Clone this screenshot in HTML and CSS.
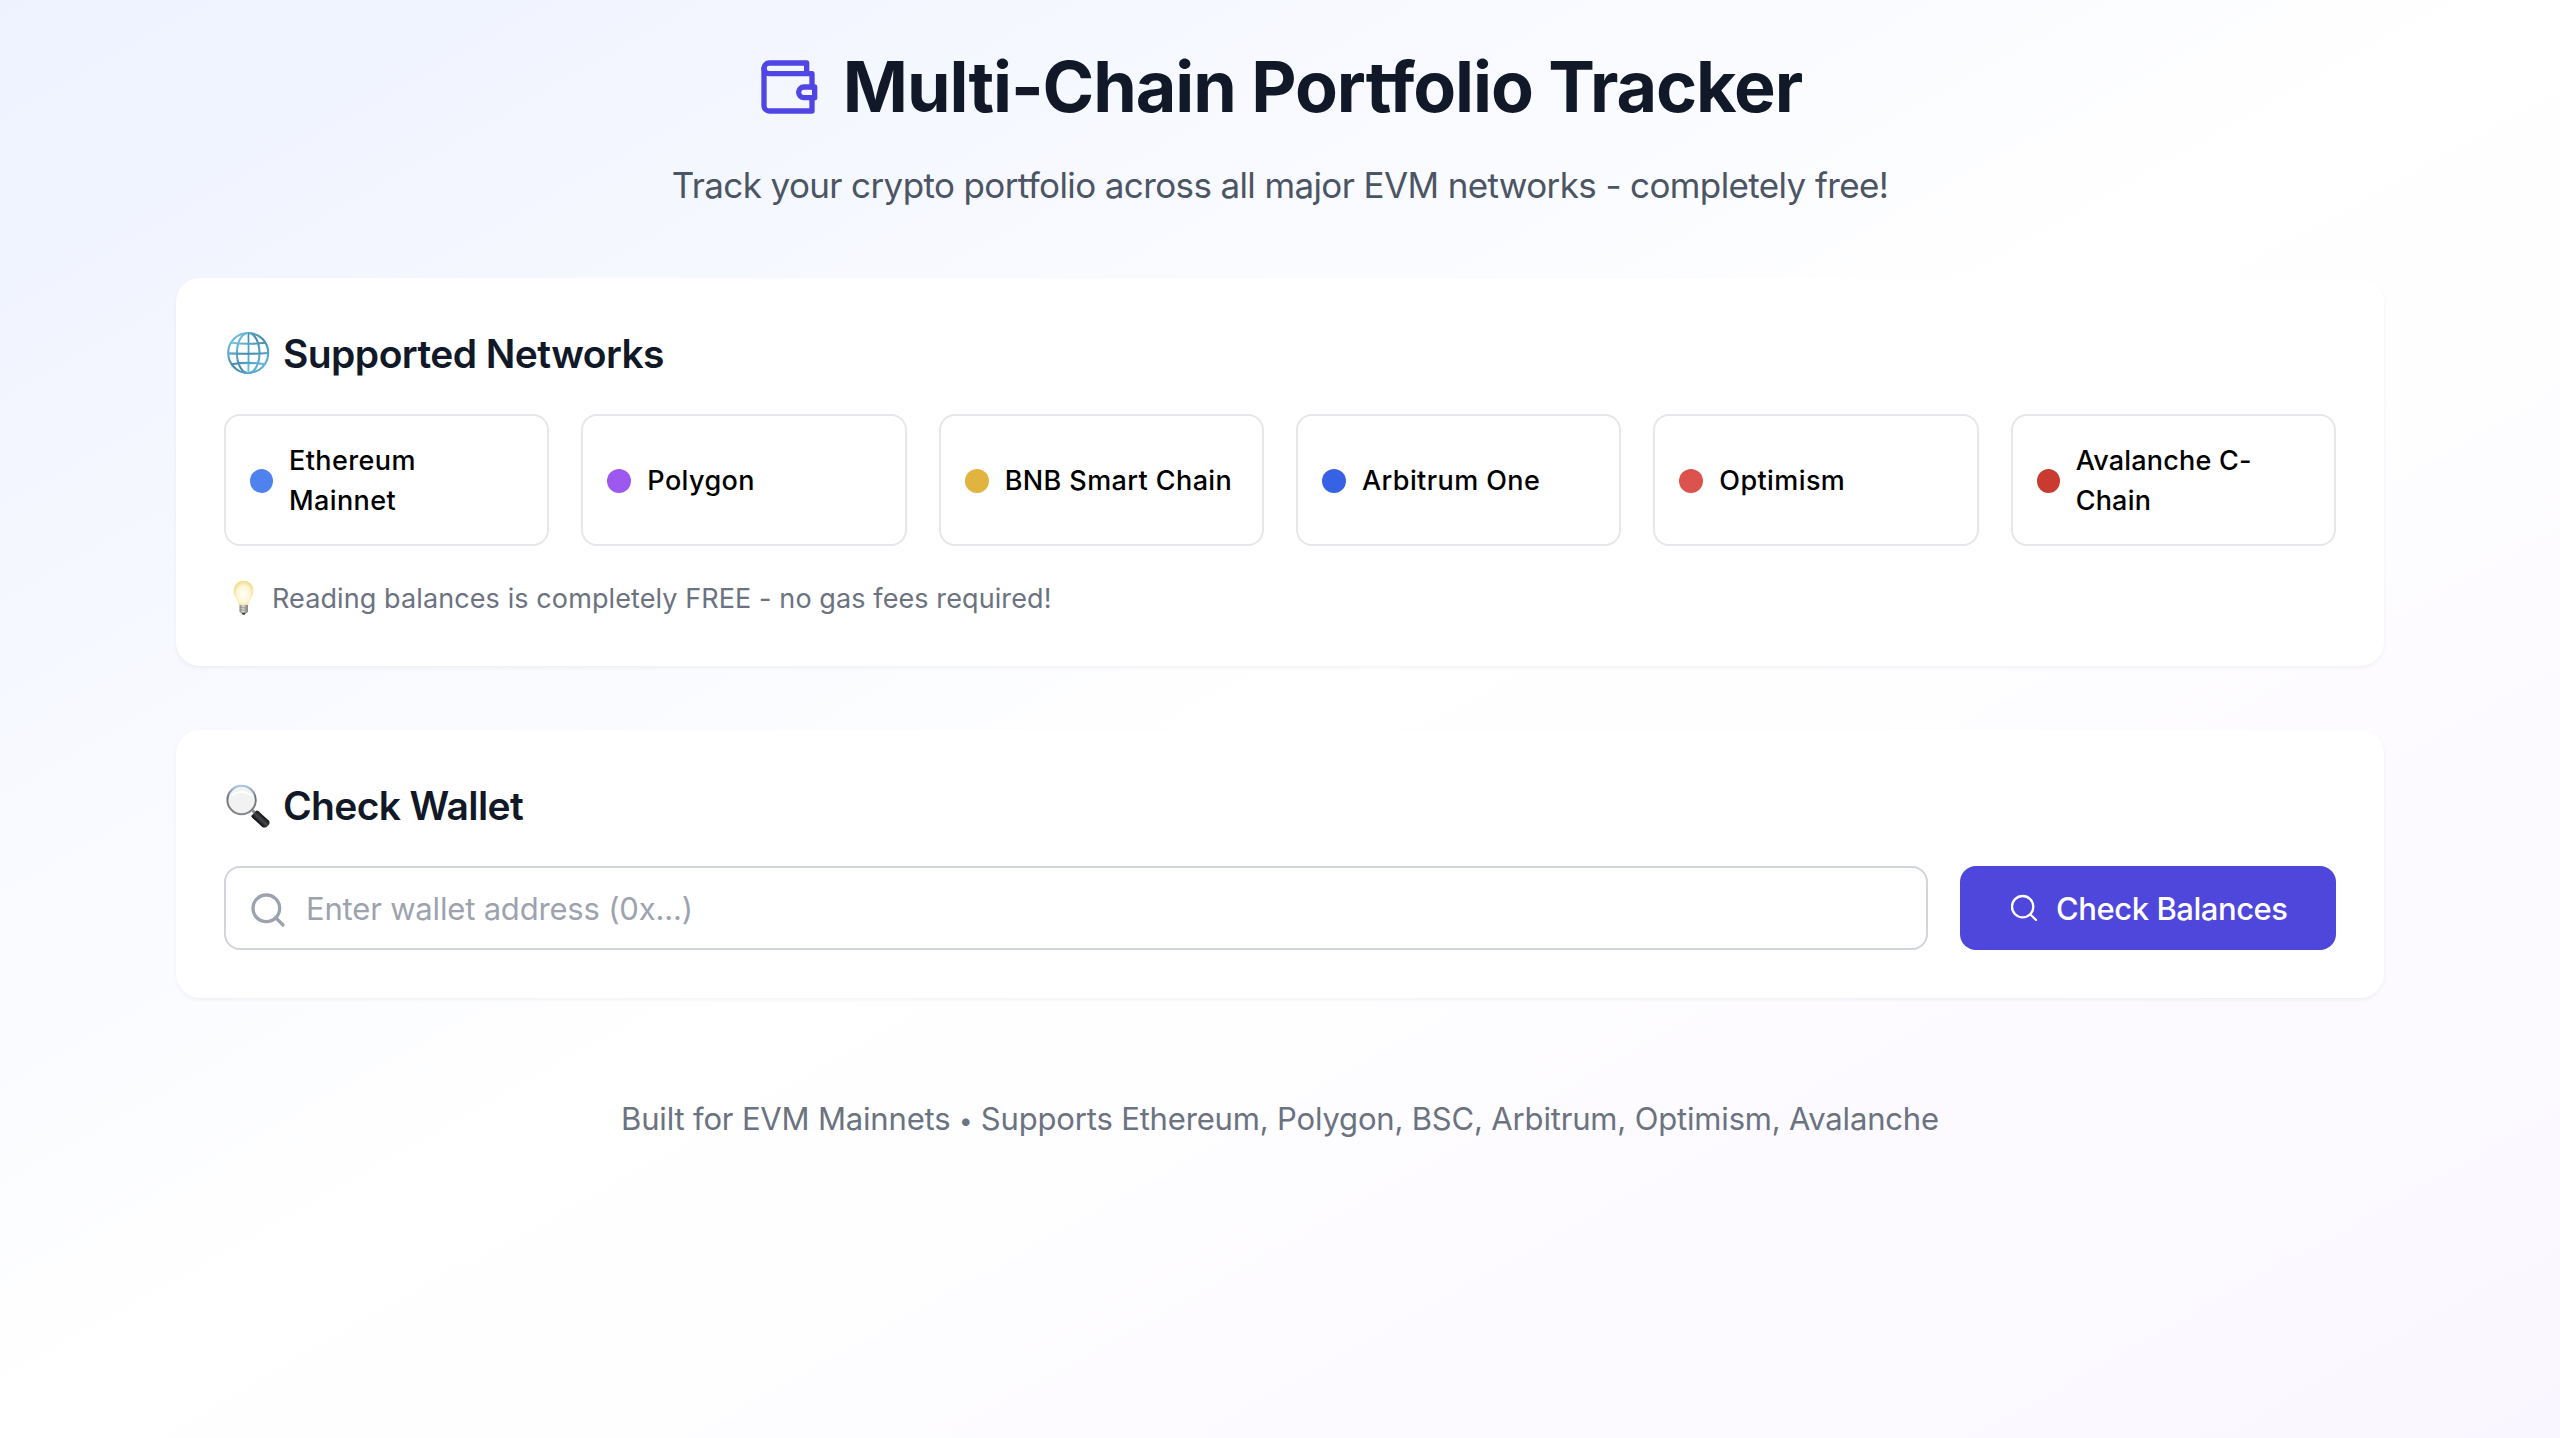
FILE: index.html
```
<!DOCTYPE html>
<html lang="en">
<head>
<meta charset="utf-8">
<title>Multi-Chain Portfolio Tracker</title>
<link rel="stylesheet" href="styles.css">
</head>
<body>
<main class="page">
  <header class="header">
    <h1 class="title">
      <svg class="title-icon" viewBox="0 0 24 24" fill="none" stroke="currentColor" stroke-width="2" stroke-linecap="round" stroke-linejoin="round"><path d="M21 12V7H5a2 2 0 0 1 0-4h14v4"/><path d="M3 5v14a2 2 0 0 0 2 2h16v-5"/><path d="M18 12a2 2 0 0 0 0 4h4v-4Z"/></svg>
      <span>Multi-Chain Portfolio Tracker</span>
    </h1>
    <p class="subtitle">Track your crypto portfolio across all major EVM networks - completely free!</p>
  </header>

  <section class="card">
    <h2 class="heading">
      <svg class="heading-icon" viewBox="0 0 48 48" fill="none">
        <defs>
          <linearGradient id="globe" x1="0" y1="0" x2="1" y2="1"><stop offset="0" stop-color="#7accea"/><stop offset=".5" stop-color="#4489ab"/><stop offset="1" stop-color="#68bde2"/></linearGradient>
        </defs>
        <g stroke="url(#globe)" stroke-width="2.1">
          <circle cx="24.2" cy="23" r="20"/>
          <ellipse cx="24.2" cy="23" rx="11.3" ry="20"/>
          <path d="M24.2 3C24.6 9 24.6 37 24.2 43"/>
          <path d="M7.5 12.8Q24 14.8 41 12.8M4 23.4Q24 24.4 44.2 23M7.5 34.2Q24 31.6 41 34.2"/>
        </g>
      </svg>
      <span>Supported Networks</span>
    </h2>
    <ul class="networks">
      <li class="network"><span class="dot dot-ethereum"></span><span>Ethereum Mainnet</span></li>
      <li class="network"><span class="dot dot-polygon"></span><span>Polygon</span></li>
      <li class="network"><span class="dot dot-bnb"></span><span>BNB Smart Chain</span></li>
      <li class="network"><span class="dot dot-arbitrum"></span><span>Arbitrum One</span></li>
      <li class="network"><span class="dot dot-optimism"></span><span>Optimism</span></li>
      <li class="network"><span class="dot dot-avalanche"></span><span>Avalanche C-Chain</span></li>
    </ul>
    <p class="note">
      <svg class="note-icon" viewBox="0 0 36 40" fill="none">
        <defs>
          <radialGradient id="bulb" cx=".5" cy=".55" r=".55"><stop offset="0" stop-color="#fffef8"/><stop offset=".6" stop-color="#fdf7d6"/><stop offset="1" stop-color="#f0da86"/></radialGradient>
          <linearGradient id="cap" x1="0" y1="0" x2="1" y2="0"><stop offset="0" stop-color="#8b8a85"/><stop offset=".45" stop-color="#deddd8"/><stop offset="1" stop-color="#77756f"/></linearGradient>
        </defs>
        <path d="M19.6 2.8c-5.8 0-9.8 4.5-9.8 10.2 0 6 4.2 8.400 5 14.200h9.600c.8-5.800 5-8.200 5-14.200 0-5.700-4-10.200-9.800-10.200Z" fill="url(#bulb)"/>
        <path d="M15.500 27h8.400v6.400c0 1.200-1.500 2-4.200 2s-4.200-.8-4.200-2Z" fill="url(#cap)"/>
        <path d="M15.500 29.300l8.400.8M15.500 31.700l8.400.8" stroke="#8d8c88" stroke-width=".7"/>
        <path d="M17.400 34.800h4.600l-1.300 2h-2Z" fill="#3c3c3c"/>
      </svg>
      <span>Reading balances is completely FREE - no gas fees required!</span>
    </p>
  </section>

  <section class="card">
    <h2 class="heading heading-wallet">
      <svg class="heading-icon" viewBox="0 1 48 48" fill="none">
        <defs>
          <linearGradient id="rim" x1="0" y1="0" x2="0" y2="1"><stop offset="0" stop-color="#a8c6e8"/><stop offset=".4" stop-color="#6f7276"/><stop offset="1" stop-color="#85878a"/></linearGradient>
          <linearGradient id="handle" x1="0" y1="1" x2="1" y2="0"><stop offset=".3" stop-color="#050505"/><stop offset=".5" stop-color="#45484c"/><stop offset=".7" stop-color="#0a0a0a"/></linearGradient>
        </defs>
        <path d="M28.500 29.500l3 3" stroke="#8a8c8f" stroke-width="3"/>
        <path d="M27.500 34.400 32.500 29.400Q33.500 29.300 34.500 30.200L45 39.700Q46.600 42.400 43.800 45Q41 47.600 38.300 45.900L28 36.500Q27 35.200 27.500 34.400Z" fill="url(#handle)"/>
        <circle cx="17.600" cy="19" r="14.200" fill="#f2f2f3" stroke="url(#rim)" stroke-width="2"/>
        <path d="M8 14.500Q17 7 27.200 14.500" stroke="#fff" stroke-width="2"/>
      </svg>
      <span>Check Wallet</span>
    </h2>
    <form class="search">
      <label class="field">
        <svg class="field-icon" viewBox="0 0 24 24" fill="none" stroke="currentColor" stroke-width="2" stroke-linecap="round" stroke-linejoin="round"><circle cx="11" cy="11" r="8"/><path d="m21 21-4.350-4.350"/></svg>
        <input class="input" type="text" placeholder="Enter wallet address (0x...)">
      </label>
      <button class="button" type="button">
        <svg class="button-icon" viewBox="0 0 24 24" fill="none" stroke="currentColor" stroke-width="1.700" stroke-linecap="round" stroke-linejoin="round"><circle cx="11" cy="11" r="8"/><path d="m21 21-4.350-4.350"/></svg>
        <span>Check Balances</span>
      </button>
    </form>
  </section>

  <footer class="footer">Built for EVM Mainnets <span class="bullet">•</span> Supports Ethereum, Polygon, BSC, Arbitrum, Optimism, Avalanche</footer>
</main>
</body>
</html>
```
FILE: styles.css
```
* { box-sizing: border-box; margin: 0; padding: 0; }

body {
  font-family: Inter, "Liberation Sans", sans-serif;
  color: #000;
}

svg { display: block; flex: none; }

.page {
  min-height: 100vh;
  padding: 47px 176px 0;
  background: linear-gradient(to bottom right, #eef2ff, #ffffff, #faf6ff);
}

.header { text-align: center; margin-bottom: 65px; }

.title {
  display: flex;
  align-items: center;
  justify-content: center;
  gap: 23px;
  margin-bottom: 30px;
  padding-right: 2px;
  font-size: 70px;
  line-height: 80px;
  font-weight: 700;
  letter-spacing: -1.07px;
  font-feature-settings: "calt" 0;
  color: #111827;
}

.title-icon { width: 64px; height: 64px; color: #4f46e5; }

.subtitle {
  font-size: 35px;
  line-height: 56px;
  letter-spacing: -0.62px;
  color: #4b5563;
}

.card {
  margin-bottom: 64px;
  padding: 48px;
  border-radius: 24px;
  background: #fff;
  box-shadow: 0 2px 4px rgba(0, 0, 0, 0.05);
}

.heading {
  display: flex;
  align-items: center;
  gap: 11px;
  margin-bottom: 32px;
  font-size: 39px;
  line-height: 56px;
  font-weight: 600;
  letter-spacing: -0.57px;
  color: #111827;
}

.heading-wallet { letter-spacing: -0.64px; }

.heading-icon { width: 48px; height: 48px; }

.networks {
  display: grid;
  grid-template-columns: repeat(6, 1fr);
  gap: 32px;
  list-style: none;
}

.network {
  display: flex;
  align-items: center;
  gap: 16px;
  height: 132px;
  padding: 25px 22px 23px 24px;
  border: 2px solid #e5e7eb;
  border-radius: 16px;
  font-size: 27px;
  line-height: 40px;
  font-weight: 500;
  letter-spacing: 0.4px;
}

.network:last-child { letter-spacing: 0.2px; }

.dot { flex: none; width: 24px; height: 24px; margin-top: -1px; border-radius: 50%; }
.network:first-child .dot, .network:last-child .dot { width: 23px; }
.dot-ethereum { background: #4f82ee; }
.dot-polygon { background: #9d58ef; }
.dot-bnb { background: #e1b43f; }
.dot-arbitrum { background: #3762e4; }
.dot-optimism { background: #dc524c; }
.dot-avalanche { background: #c93a31; }

.note {
  display: flex;
  align-items: center;
  gap: 12px;
  margin-top: 32px;
  font-size: 27px;
  line-height: 40px;
  letter-spacing: 0.1px;
  color: #6b7280;
}

.note span { padding-top: 1px; margin-bottom: -1px; }

.note-icon { width: 36px; height: 40px; }

.search { display: flex; gap: 32px; }

.field {
  display: flex;
  flex: 1;
  align-items: center;
  gap: 18px;
  height: 84px;
  padding: 0 22px;
  border: 2px solid #d1d5db;
  border-radius: 16px;
  background: #fff;
}

.field-icon { width: 40px; height: 40px; margin-top: 3px; color: #9ca3af; }

.input {
  flex: 1;
  padding-top: 2px;
  border: 0;
  outline: 0;
  background: transparent;
  font: 400 31px/48px Inter, "Liberation Sans", sans-serif;
  letter-spacing: -0.18px;
}

.input::placeholder { color: #9ca3af; opacity: 1; }

.button {
  display: flex;
  align-items: center;
  gap: 16px;
  width: 376px;
  height: 84px;
  padding: 0 48px;
  border: 0;
  border-radius: 16px;
  background: #4f46dc;
  color: #fff;
  font: 500 31px/48px Inter, "Liberation Sans", sans-serif;
  letter-spacing: -0.45px;
  white-space: nowrap;
}

.button span { padding-top: 2px; }

.button-icon { width: 32px; height: 32px; }

.footer {
  padding-top: 33px;
  text-align: center;
  font-size: 31px;
  line-height: 48px;
  letter-spacing: -0.17px;
  color: #6b7280;
}

.bullet { font-size: 24px; line-height: 1; vertical-align: 1px; }
```
